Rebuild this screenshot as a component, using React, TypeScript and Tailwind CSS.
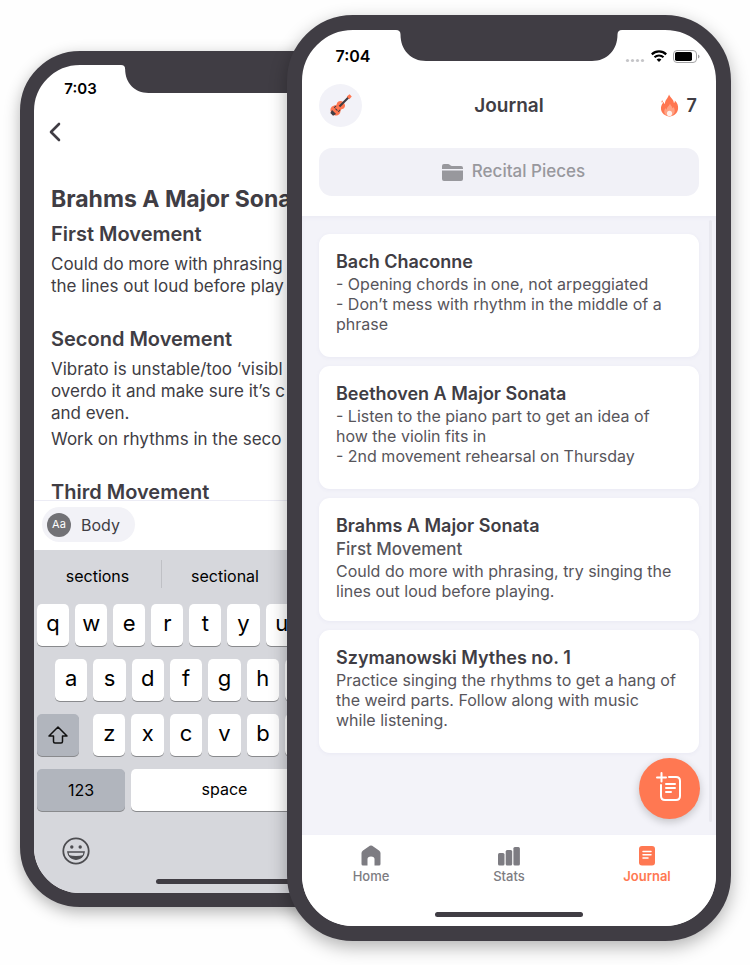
import React from "react";

function Notch({ className }: { className: string }) {
  return (
    <svg viewBox="0 0 226 31" className={className} fill="#403d44" preserveAspectRatio="none" aria-hidden="true">
      <path d="M0 0h226c-3 0-4.500 1.500-4.500 4.500C221.500 20 211 31 196 31H30C15 31 4.500 20 4.500 4.500 4.500 1.500 3 0 0 0Z" />
    </svg>
  );
}

function KeyRow({ letters, className }: { letters: string; className: string }) {
  return (
    <div className={className}>
      {letters.split("").map((l) => (
        <button key={l} className="h-[42px] min-w-0 rounded-[5px] bg-white pb-1 text-[22px] leading-8 text-black shadow-[0_1px_0_#898a8d]">
          {l}
        </button>
      ))}
    </div>
  );
}

function EditorPhone() {
  return (
    <section className="col-start-1 col-end-3 row-start-1 mt-9 flex h-[856px] flex-col overflow-hidden rounded-[60px] border-[14px] border-[#403d44] bg-white text-[#403d44] shadow-[0_5px_16px_rgba(0,0,0,0.3)]">
      <header className="grid grid-cols-[87px_1fr_87px]">
        <time className="pt-[14px] pl-[6px] text-center text-[15px] leading-5 font-semibold text-black">7:03</time>
        <Notch className="h-7 w-full" />
      </header>
      <button aria-label="Back" className="mt-[21px] ml-[11px] flex h-6 w-5 items-center justify-center">
        <svg viewBox="0 0 14 20" className="h-5 w-[14px]" fill="none" stroke="#403d44" strokeWidth="2.600" strokeLinecap="round" strokeLinejoin="round">
          <path d="M11 2 3 10l8 8" />
        </svg>
      </button>
      <article className="mt-[39px] h-[317px] pl-[17px] text-[17px] leading-[22px] whitespace-nowrap">
        <h1 className="text-[23px] leading-8 font-bold">Brahms A Major Sonata</h1>
        <h2 className="mt-[3px] text-xl leading-8 font-semibold">First Movement</h2>
        <p className="mt-[3px]">Could do more with phrasing<br />the lines out loud before play</p>
        <h2 className="mt-[26px] text-xl leading-8 font-semibold">Second Movement</h2>
        <p className="mt-[3px]">Vibrato is unstable/too ‘visibl<br />overdo it and make sure it’s c<br />and even.</p>
        <p className="mt-1">Work on rhythms in the seco</p>
        <h2 className="mt-[26px] text-xl leading-8 font-semibold">Third Movement</h2>
      </article>
      <div className="flex h-[50px] items-start border-t border-[#ececf5] pt-[6px] pl-2">
        <button className="flex h-[35px] items-center gap-[10px] rounded-full bg-[#f2f2f7] pr-[15px] pl-[5px] text-base">
          <span className="flex h-6 w-6 items-center justify-center rounded-full bg-[#727276] text-[11px] text-white">Aa</span>
          Body
        </button>
      </div>
      <div className="flex flex-1 flex-col bg-[#d6d7dc]">
        <div className="mt-[10px] grid h-[26px] grid-cols-3 text-base text-black">
          <button className="pt-1">sections</button>
          <button className="border-l border-[#bfc0c5] pt-1">sectional</button>
        </div>
        <div className="flex flex-col gap-[13px] px-[3px] pt-[18px]">
          <KeyRow letters="qwertyu" className="grid grid-cols-10 gap-[6px]" />
          <KeyRow letters="asdfghj" className="grid grid-cols-9 gap-[6px] px-[18px]" />
          <div className="flex gap-[14px]">
            <button aria-label="Shift" className="flex h-[42px] w-[42px] items-center justify-center rounded-[5px] bg-[#b1b5bd] shadow-[0_1px_0_#898a8d]">
              <svg viewBox="0 0 20 18" className="h-[18px] w-5" fill="none" stroke="#111" strokeWidth="1.500" strokeLinejoin="round">
                <path d="M10 1 1 10h4.500v5.500q0 1.500 1.500 1.500h6q1.500 0 1.500-1.500V10H19Z" />
              </svg>
            </button>
            <KeyRow letters="zxcvbn" className="grid flex-1 grid-cols-7 gap-[6px]" />
            <span className="w-[42px] rounded-[5px] bg-[#b1b5bd]" />
          </div>
          <div className="flex gap-[6px] text-base text-black">
            <button className="h-[42px] w-[88px] rounded-[5px] bg-[#b1b5bd] shadow-[0_1px_0_#898a8d]">123</button>
            <button className="h-[42px] flex-1 rounded-[5px] bg-white pb-[2px] shadow-[0_1px_0_#898a8d]">space</button>
            <span className="w-[88px] rounded-[5px] bg-[#b1b5bd]" />
          </div>
        </div>
        <button aria-label="Emoji" className="mt-[26px] ml-7 h-7 w-7">
          <svg viewBox="0 0 28 28" className="h-7 w-7" fill="none" stroke="#4d4d51" strokeWidth="1.800">
            <circle cx="14" cy="14" r="12.700" />
            <circle cx="9.800" cy="10" r="1.700" fill="#4d4d51" stroke="none" />
            <circle cx="18.200" cy="10" r="1.700" fill="#4d4d51" stroke="none" />
            <path d="M5.800 15h16.400c-.5 4.500-4 7.300-8.200 7.300S6.300 19.500 5.800 15Z" strokeWidth="1.300" />
            <path d="M6.500 18c4.500 1.300 10.500 1.300 15 0-1.300 3-4.200 4.300-7.500 4.300S7.800 21 6.500 18Z" fill="#4d4d51" stroke="none" />
          </svg>
        </button>
        <div className="mx-auto mt-auto mb-[9px] h-[5px] w-[137px] rounded-full bg-[#403d44]" />
      </div>
    </section>
  );
}

function Violin() {
  return (
    <svg viewBox="0 0 24 24" className="h-[23px] w-[23px]" aria-hidden="true">
      <g transform="rotate(45 12 12)">
        <path d="M12 7.500c2.800 0 4.500 1.600 4.500 4 0 1.500-1 2-1 3.300s2 2 2 4.700c0 3-2.500 4.800-5.500 4.800s-5.500-1.800-5.500-4.800c0-2.700 2-3.400 2-4.700s-1-1.800-1-3.300c0-2.400 1.700-4 4.500-4Z" fill="#ff7650" />
        <path d="M10.900 0h2.200v13.500h-2.200ZM9 21.500h6l-1 3.500h-4Z" fill="#403d44" />
        <path d="M10.400-3h3.200l.3 3.800h-3.800Z" fill="#ff7650" />
        <path d="M9 15.500v3M15 15.500v3M10.500 18h3" stroke="#403d44" strokeWidth="1" />
      </g>
    </svg>
  );
}

function Flame() {
  return (
    <svg viewBox="0 0 20 24" className="h-[23px] w-[19px]" aria-hidden="true">
      <path d="M9.500.5c1 3 5 5 5.200 9 .8-.6 1-1.500.9-2.700 2.500 2.300 3.900 5.500 3.400 9-.6 4.500-4.500 7.700-9 7.700S1.200 20 1 15.500C.8 12 2.500 10 4 8c.2 1.500.5 2 1.200 2.500C5 6.500 8.500 4.500 9.500.5Z" fill="#ff7650" />
      <path d="M2.300 6.500c1 .7.700 2.300-.3 2.600-.6-.9-.4-1.900.3-2.600Z" fill="#ff7650" />
      <path d="M10.500 10c.6 2.500 2.500 3 2.500 5 .7-.3 1-.8 1.200-1.500 1.500 2 1.700 4.700.8 6.500-1 2-3 3-5.200 3-3 0-5.300-2-5.300-4.800 0-1.700.6-2.700 1.500-3.700.1 1 .4 1.500 1 1.800 0-2.500 2.800-3.500 3.500-6.300Z" fill="#ffa183" />
      <circle cx="10" cy="20.300" r="2.700" fill="#fff0eb" />
    </svg>
  );
}

function Status() {
  return (
    <div className="flex items-start gap-[6px] pt-5 pl-[3px]">
      <svg viewBox="0 0 20 14" className="h-[14px] w-5" fill="#c5c5c8" aria-hidden="true">
        <circle cx="2.500" cy="10.500" r="1.600" />
        <circle cx="7.500" cy="10.500" r="1.600" />
        <circle cx="12.500" cy="10.500" r="1.600" />
        <circle cx="17.500" cy="10.500" r="1.600" />
      </svg>
      <svg viewBox="0 0 16 12" className="h-3 w-4" fill="none" stroke="#000" strokeWidth="2.200" aria-label="Wi-Fi">
        <path d="M.8 4.400a10.300 10.300 0 0 1 14.400 0" />
        <path d="M3.500 7.300a6.500 6.500 0 0 1 9 0" />
        <path d="M8 12 5.600 9.600a3.400 3.400 0 0 1 4.800 0Z" fill="#000" stroke="none" />
      </svg>
      <svg viewBox="0 0 27 13" className="h-[13px] w-[27px]" aria-label="Battery">
        <rect x=".5" y=".5" width="23" height="12" rx="3.500" fill="none" stroke="#a3a3a5" />
        <rect x="2" y="2" width="17" height="9" rx="1.800" />
        <path d="M25 4.500q1.500.5 1.500 2t-1.500 2Z" fill="#a3a3a5" />
      </svg>
    </div>
  );
}

const entries = [
  { title: "Bach Chaconne", sub: "", lines: ["- Opening chords in one, not arpeggiated", "- Don’t mess with rhythm in the middle of a", "phrase"] },
  { title: "Beethoven A Major Sonata", sub: "", lines: ["- Listen to the piano part to get an idea of", "how the violin fits in", "- 2nd movement rehearsal on Thursday"] },
  { title: "Brahms A Major Sonata", sub: "First Movement", lines: ["Could do more with phrasing, try singing the", "lines out loud before playing."] },
  { title: "Szymanowski Mythes no. 1", sub: "", lines: ["Practice singing the rhythms to get a hang of", "the weird parts. Follow along with music", "while listening."] },
];

function JournalPhone() {
  return (
    <section className="relative col-start-2 col-end-4 row-start-1 flex h-[926px] flex-col overflow-hidden rounded-[66px] border-[15px] border-[#403d44] bg-white text-[#403d44] shadow-[0_6px_18px_rgba(0,0,0,0.3)]">
      <header className="grid grid-cols-[94px_1fr_94px]">
        <time className="pt-4 pl-2 text-center text-base leading-5 font-semibold text-black">7:04</time>
        <Notch className="h-[31px] w-full" />
        <Status />
      </header>
      <div className="mt-[18px] grid grid-cols-3 items-center px-[17px]">
        <button aria-label="Violin" className="flex h-[43px] w-[43px] items-center justify-center rounded-full bg-[#f2f2f8]">
          <Violin />
        </button>
        <h1 className="text-center text-[19px] leading-6 font-semibold">Journal</h1>
        <div className="flex items-center justify-end gap-2 pr-[2px] text-lg font-semibold">
          <Flame />7
        </div>
      </div>
      <button className="mx-[17px] mt-[21px] flex h-12 items-center justify-center gap-[9px] rounded-[13px] bg-[#f1f1f7] pl-[9px] text-[17px] font-medium text-[#98989d]">
        <svg viewBox="0 0 21 17" className="h-[17px] w-[21px]" fill="#98989d" aria-hidden="true">
          <path d="M0 5V2Q0 0 2 0h4q1 0 2 1t2 1h9q2 0 2 2v1ZM0 6.500h21V15q0 2-2 2H2q-2 0-2-2Z" />
        </svg>
        Recital Pieces
      </button>
      <main className="mt-5 flex-1 bg-[#f3f3f9] px-[17px] pt-[18px] shadow-[inset_0_2px_4px_rgba(90,90,150,0.05)]">
        <div className="flex flex-col gap-[9px]">
          {entries.map((e) => (
            <article key={e.title} className="h-[123px] overflow-hidden rounded-[11px] bg-white px-[17px] pt-4 text-base leading-5 whitespace-nowrap text-[#57555b] shadow-[0_1px_4px_rgba(90,90,150,0.06)]">
              <h2 className="text-lg leading-6 font-semibold text-[#403d44]">{e.title}</h2>
              {e.sub && <h3 className="text-[17px] leading-[23px] font-medium">{e.sub}</h3>}
              <p>
                {e.lines.map((l) => (
                  <span key={l} className="block">{l}</span>
                ))}
              </p>
            </article>
          ))}
        </div>
      </main>
      <div className="absolute top-[190px] right-1 h-[602px] w-[3px] rounded-full bg-[#e9e9f0]" />
      <button aria-label="New entry" className="absolute right-4 bottom-[107px] flex h-[61px] w-[61px] items-center justify-center rounded-full bg-[#ff7852] pr-[2px] pb-[3px] shadow-[0_3px_8px_rgba(0,0,0,0.2)]">
        <svg viewBox="0 0 26 30" className="h-[30px] w-[26px]" fill="none" stroke="#fff" strokeWidth="2" strokeLinecap="round">
          <path d="M5.500 1v8.500M1 5.500h9M13 5H20q4 0 4 4v15q0 4-4 4H9q-4 0-4-4V13M10 12h9M10 16h9M10 20h5" />
        </svg>
      </button>
      <nav className="h-[91px] bg-white pt-[10px]">
        <div className="grid grid-cols-3 text-[13px] leading-4 font-medium text-[#7d7c82]">
          <a href="#home" className="flex flex-col items-center gap-[2px]">
            <svg viewBox="0 0 20 21" className="h-[21px] w-5" fill="#7d7c82" aria-hidden="true">
              <path d="M8.800.8Q10 0 11.200.8L18 5.500q1.500 1 1.500 2.500V19q0 1.500-1.500 1.500h-4.500V14q0-2.500-3.500-2.500T6.500 14v6.500H2Q.5 20.500.5 19V8Q.5 6.500 2 5.500Z" />
            </svg>
            Home
          </a>
          <a href="#stats" className="flex flex-col items-center gap-[2px]">
            <svg viewBox="0 0 22 21" className="h-[21px] w-[22px]" fill="#7d7c82" aria-hidden="true">
              <rect y="8" width="6.500" height="12.500" rx="1.500" />
              <rect x="7.700" y="5" width="6.500" height="15.500" rx="1.500" />
              <rect x="15.400" y="2" width="6.500" height="18.500" rx="1.500" />
            </svg>
            Stats
          </a>
          <a href="#journal" className="flex flex-col items-center gap-[2px] font-semibold text-[#ff7852]">
            <svg viewBox="0 0 16 21" className="h-[21px] w-4" fill="#ff7852" aria-hidden="true">
              <rect y="1" width="16" height="19.500" rx="3" />
              <path d="M4 6.500h8M4 9.700h8M4 13h5" stroke="#fff" strokeWidth="1.500" strokeLinecap="round" />
            </svg>
            Journal
          </a>
        </div>
        <div className="mx-auto mt-7 h-[5px] w-[148px] rounded-full bg-[#403d44]" />
      </nav>
    </section>
  );
}

export default function App() {
  return (
    <div className="bg-[#fefefe] pt-[15px] pr-[19px] pb-6 pl-5 font-['Inter','Liberation_Sans',sans-serif]">
      <div className="grid grid-cols-[267fr_142fr_302fr] items-start">
        <EditorPhone />
        <JournalPhone />
      </div>
    </div>
  );
}
